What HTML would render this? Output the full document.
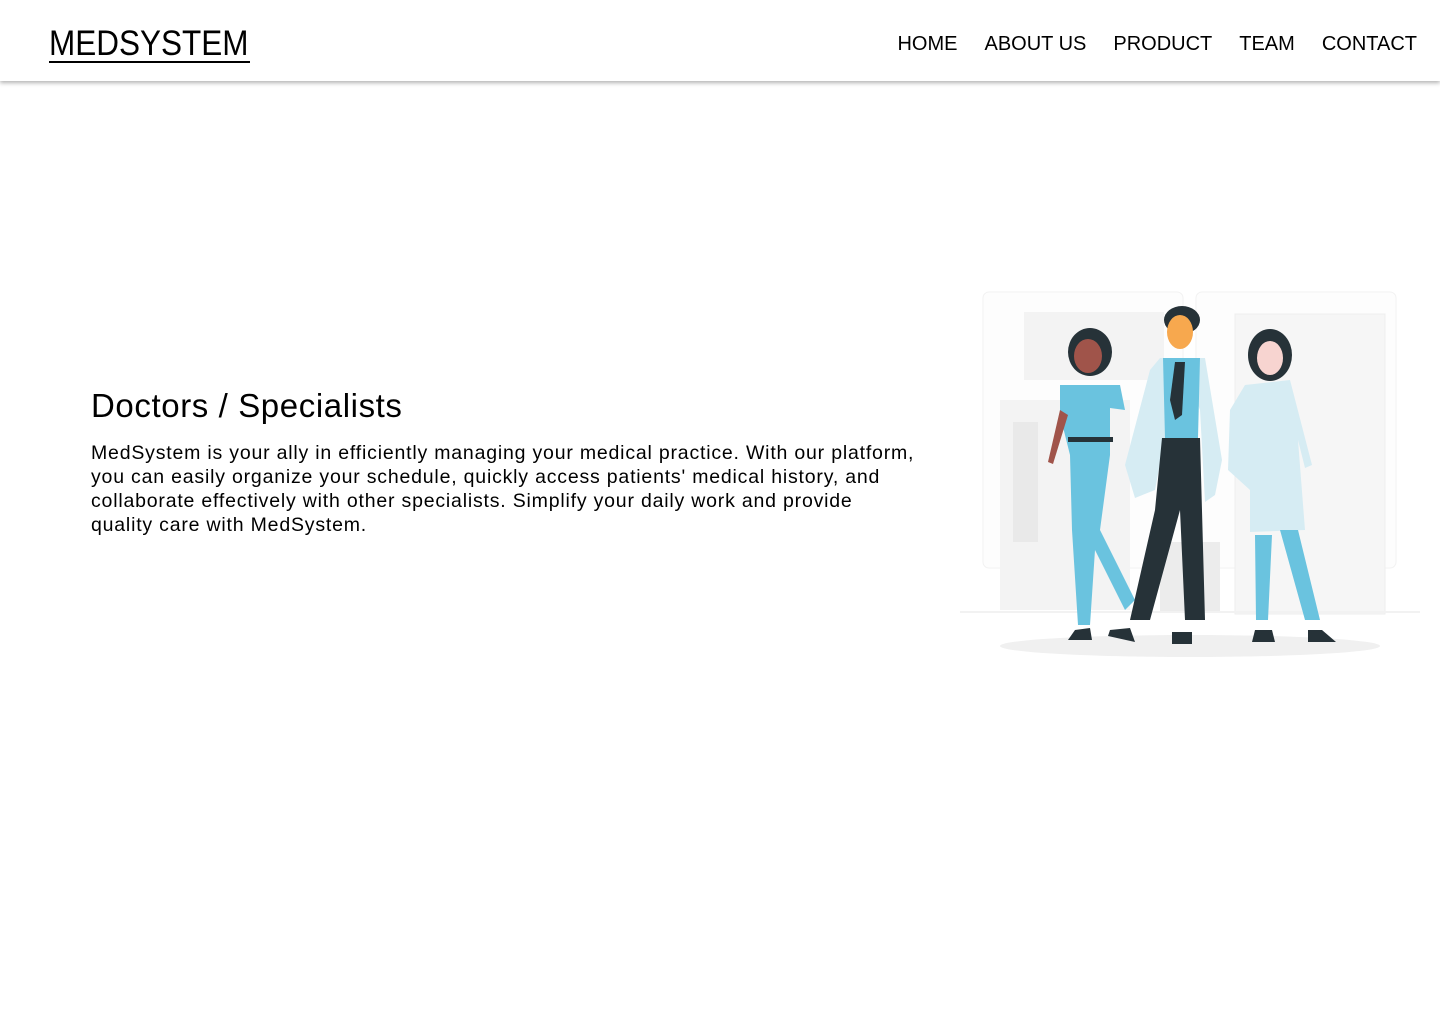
<!DOCTYPE html>
<html><head><meta charset="utf-8"><style>
*{margin:0;padding:0;box-sizing:border-box}
body{width:1440px;height:1024px;background:#fff;font-family:"Liberation Sans",sans-serif;color:#000;position:relative;overflow:hidden}
header{position:absolute;left:0;top:0;width:1440px;height:81px;background:#fff;box-shadow:0 2px 4px rgba(0,0,0,.3)}
.logo{position:absolute;left:49px;top:27px;font-size:35px;line-height:33px;border-bottom:2px solid #000;padding-bottom:1px;width:201px;white-space:nowrap;overflow:visible}
.logo span{display:inline-block;transform:scaleX(0.9);transform-origin:left}
nav{position:absolute;right:23px;top:33px;font-size:20px;display:flex;gap:27px}
h1{position:absolute;left:91px;top:387px;font-size:33px;font-weight:normal;letter-spacing:0.6px}
p{position:absolute;left:91px;top:441px;width:826px;font-size:19.5px;line-height:24px;letter-spacing:0.8px}
svg{position:absolute;left:960px;top:290px}
</style></head><body>
<header><div class="logo"><span>MEDSYSTEM</span></div>
<nav><span>HOME</span><span>ABOUT US</span><span>PRODUCT</span><span>TEAM</span><span>CONTACT</span></nav></header>
<h1>Doctors / Specialists</h1>
<p>MedSystem is your ally in efficiently managing your medical practice. With our platform, you can easily organize your schedule, quickly access patients' medical history, and collaborate effectively with other specialists. Simplify your daily work and provide quality care with MedSystem.</p>
<svg width="460" height="380" viewBox="0 0 460 380">
<rect x="23" y="2" width="200" height="276" rx="6" fill="#fdfdfd" stroke="#f2f2f2"/>
<rect x="236" y="2" width="200" height="276" rx="6" fill="#fdfdfd" stroke="#f2f2f2"/>
<rect x="64" y="22" width="140" height="68" fill="#f3f3f3"/>
<rect x="275" y="24" width="150" height="300" fill="#f6f6f6" stroke="#eee"/>
<rect x="40" y="110" width="130" height="210" fill="#f3f3f3"/>
<rect x="53" y="132" width="25" height="120" fill="#e9e9e9"/>
<rect x="200" y="252" width="60" height="70" fill="#ececec"/>
<line x1="0" y1="322" x2="460" y2="322" stroke="#f2f2f2" stroke-width="2"/>
<ellipse cx="230" cy="356" rx="190" ry="11" fill="#f0f0f0"/>
<ellipse cx="130" cy="62" rx="22" ry="24" fill="#263238"/>
<ellipse cx="128" cy="66" rx="14" ry="17" fill="#a0544a"/>
<path d="M100 95 L160 95 L165 120 L150 118 L150 165 L140 240 L175 310 L165 320 L135 260 L130 335 L118 335 L112 240 L110 165 L100 125Z" fill="#6ac3df"/>
<rect x="108" y="147" width="45" height="5" fill="#263238"/>
<path d="M100 120 L88 172 L93 174 L108 125Z" fill="#a0544a"/>
<path d="M115 340 L130 338 L132 350 L108 350Z" fill="#263238"/>
<ellipse cx="222" cy="30" rx="18" ry="14" fill="#263238"/>
<ellipse cx="220" cy="42" rx="13" ry="17" fill="#f7a84e"/>
<path d="M200 68 L245 68 L262 170 L255 205 L245 212 L240 120 L225 80 L210 120 L195 200 L175 208 L165 175 L190 80Z" fill="#d6ecf3"/>
<path d="M203 68 L240 68 L238 148 L205 148Z" fill="#6ac3df"/>
<path d="M215 72 L225 72 L222 125 L215 130 L210 110Z" fill="#263238"/>
<path d="M202 148 L240 148 L245 330 L225 330 L220 220 L190 330 L170 330 L195 220Z" fill="#263238"/>
<path d="M150 340 L170 338 L175 352 L148 346Z M212 342 L232 342 L232 354 L212 354Z" fill="#263238"/>
<ellipse cx="310" cy="65" rx="22" ry="26" fill="#263238"/>
<ellipse cx="310" cy="68" rx="13" ry="17" fill="#f7d4d0"/>
<path d="M285 95 L330 90 L352 175 L345 178 L338 150 L345 240 L290 242 L290 200 L268 180 L270 120Z" fill="#d6ecf3"/>
<path d="M295 245 L312 245 L308 330 L296 330Z M320 240 L338 240 L360 330 L345 330Z" fill="#6ac3df"/>
<path d="M295 340 L312 340 L315 352 L292 352Z M348 340 L362 340 L376 352 L348 352Z" fill="#263238"/>
</svg>
</body></html>
